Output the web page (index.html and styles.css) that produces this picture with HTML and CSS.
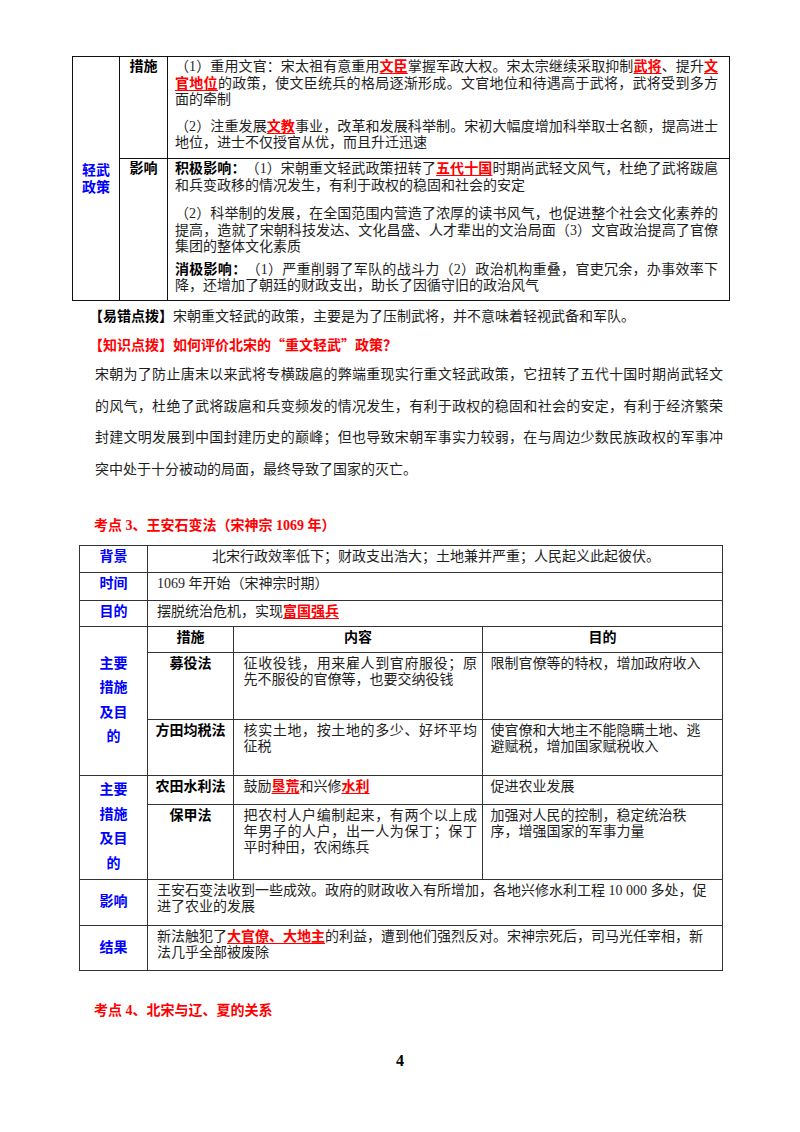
FILE: index.html
```html
<!DOCTYPE html>
<html lang="zh-CN">
<head>
<meta charset="utf-8">
<title>王安石变法</title>
<link rel="stylesheet" href="styles.css">
</head>
<body>
<div class="page">
  <table class="t1">
    <colgroup><col class="t1-c1"><col class="t1-c2"><col class="t1-c3"></colgroup>
    <tr class="t1-r1">
      <td class="t1-side" rowspan="2">轻武<br>政策</td>
      <td class="t1-label">措施</td>
      <td class="t1-body">
        <p>（1）重用文官：宋太祖有意重用<b class="key">文臣</b>掌握军政大权。宋太宗继续采取抑制<b class="key">武将</b>、提升<b class="key">文官地位</b>的政策，使文臣统兵的格局逐渐形成。文官地位和待遇高于武将，武将受到多方面的牵制</p>
        <p class="gap-a">（2）注重发展<b class="key">文教</b>事业，改革和发展科举制。宋初大幅度增加科举取士名额，提高进士地位，进士不仅授官从优，而且升迁迅速</p>
      </td>
    </tr>
    <tr class="t1-r2">
      <td class="t1-label">影响</td>
      <td class="t1-body">
        <p><b>积极影响：</b>（1）宋朝重文轻武政策扭转了<b class="key">五代十国</b>时期尚武轻文风气，杜绝了武将跋扈和兵变政移的情况发生，有利于政权的稳固和社会的安定</p>
        <p class="gap-b">（2）科举制的发展，在全国范围内营造了浓厚的读书风气，也促进整个社会文化素养的提高，造就了宋朝科技发达、文化昌盛、人才辈出的文治局面（3）文官政治提高了官僚集团的整体文化素质</p>
        <p class="gap-c"><b>消极影响：</b>（1）严重削弱了军队的战斗力（2）政治机构重叠，官吏冗余，办事效率下降，还增加了朝廷的财政支出，助长了因循守旧的政治风气</p>
      </td>
    </tr>
  </table>

  <p class="tip tip-first"><b>【易错点拨】</b>宋朝重文轻武的政策，主要是为了压制武将，并不意味着轻视武备和军队。</p>
  <p class="tip tip-red">【知识点拨】如何评价北宋的<span class="cjk">“</span>重文轻武<span class="cjk">”</span>政策？</p>
  <p class="essay">宋朝为了防止唐末以来武将专横跋扈的弊端重现实行重文轻武政策，它扭转了五代十国时期尚武轻文的风气，杜绝了武将跋扈和兵变频发的情况发生，有利于政权的稳固和社会的安定，有利于经济繁荣封建文明发展到中国封建历史的巅峰；但也导致宋朝军事实力较弱，在与周边少数民族政权的军事冲突中处于十分被动的局面，最终导致了国家的灭亡。</p>

  <h2 class="kd">考点 3、王安石变法（宋神宗 1069 年）</h2>

  <table class="t2">
    <colgroup><col class="t2-c1"><col class="t2-c2"><col class="t2-c3"><col class="t2-c4"></colgroup>
    <tr class="r-bg">
      <td class="side">背景</td>
      <td class="wide center" colspan="3">北宋行政效率低下；财政支出浩大；土地兼并严重；人民起义此起彼伏。</td>
    </tr>
    <tr class="r-time">
      <td class="side">时间</td>
      <td class="wide" colspan="3">1069 年开始（宋神宗时期）</td>
    </tr>
    <tr class="r-aim">
      <td class="side">目的</td>
      <td class="wide" colspan="3">摆脱统治危机，实现<b class="key">富国强兵</b></td>
    </tr>
    <tr class="r-head">
      <td class="side side-mid side-tall" rowspan="3">主要<br>措施<br>及目<br>的</td>
      <td class="name">措施</td>
      <td class="head">内容</td>
      <td class="head">目的</td>
    </tr>
    <tr class="r-my">
      <td class="name">募役法</td>
      <td class="cont">征收役钱，用来雇人到官府服役；原先不服役的官僚等，也要交纳役钱</td>
      <td class="goal">限制官僚等的特权，增加政府收入</td>
    </tr>
    <tr class="r-ft">
      <td class="name">方田均税法</td>
      <td class="cont">核实土地，按土地的多少、好坏平均征税</td>
      <td class="goal">使官僚和大地主不能隐瞒土地、逃避赋税，增加国家赋税收入</td>
    </tr>
    <tr class="r-nt">
      <td class="side side-mid side-tall" rowspan="2">主要<br>措施<br>及目<br>的</td>
      <td class="name">农田水利法</td>
      <td class="cont">鼓励<b class="key">垦荒</b>和兴修<b class="key">水利</b></td>
      <td class="goal">促进农业发展</td>
    </tr>
    <tr class="r-bj">
      <td class="name">保甲法</td>
      <td class="cont">把农村人户编制起来，有两个以上成年男子的人户，出一人为保丁；保丁平时种田，农闲练兵</td>
      <td class="goal">加强对人民的控制，稳定统治秩序，增强国家的军事力量</td>
    </tr>
    <tr class="r-yx">
      <td class="side side-mid">影响</td>
      <td class="wide" colspan="3">王安石变法收到一些成效。政府的财政收入有所增加，各地兴修水利工程 10 000 多处，促进了农业的发展</td>
    </tr>
    <tr class="r-jg">
      <td class="side side-mid">结果</td>
      <td class="wide" colspan="3">新法触犯了<b class="key">大官僚、大地主</b>的利益，遭到他们强烈反对。宋神宗死后，司马光任宰相，新法几乎全部被废除</td>
    </tr>
  </table>

  <h2 class="kd kd-4">考点 4、北宋与辽、夏的关系</h2>

  <div class="pnum">4</div>
</div>
</body>
</html>
```

FILE: styles.css
```css
html, body {
  margin: 0;
  padding: 0;
  background: #ffffff;
}

body {
  font-family: "Liberation Serif", "Noto Sans CJK SC", serif;
  font-size: 14px;
  color: #1e1e1e;
  text-spacing-trim: space-all;
}

.page {
  width: 800px;
  padding-top: 56px;
}

p {
  margin: 0;
}

b {
  font-weight: bold;
  color: #000;
}

.cjk {
  font-family: "Noto Sans CJK SC", sans-serif;
}

.key,
b.key {
  color: #ff0000;
  font-weight: bold;
  text-decoration: underline;
  text-decoration-thickness: 1px;
  text-underline-offset: 2px;
}

/* ---------- table 1 ---------- */
.t1 {
  border-collapse: collapse;
  table-layout: fixed;
  width: 657px;
  margin-left: 72px;
}

.t1-c1 { width: 47px; }
.t1-c2 { width: 48px; }
.t1-c3 { width: 562px; }

.t1 td {
  border: 1px solid #111;
  padding: 0;
  vertical-align: top;
}

.t1-r1 { height: 102px; }
.t1-r2 { height: 142px; }

.t1 td.t1-side {
  vertical-align: middle;
  text-align: center;
  color: #0000ff;
  font-weight: bold;
  line-height: 17px;
}

.t1 td.t1-label {
  text-align: center;
  font-weight: bold;
  color: #000;
  line-height: 16.5px;
  padding-top: 2px;
}

.t1 td.t1-body {
  padding: 2px 11px 0 7px;
  line-height: 16.5px;
  text-align: justify;
}

.gap-a { margin-top: 10px; }
.gap-b { margin-top: 12px; }
.gap-c { margin-top: 6px; }

/* ---------- notes ---------- */
.tip {
  margin-left: 89px;
}

.tip-first {
  margin-top: 2px;
  line-height: 28px;
}

.tip-red {
  line-height: 26px;
  color: #ff0000;
  font-weight: bold;
}

.essay {
  margin-left: 95px;
  width: 628px;
  line-height: 31.7px;
  text-align: justify;
}

.kd {
  margin: 30px 0 0 94px;
  font-size: 14px;
  line-height: 20px;
  font-weight: bold;
  color: #ff0000;
}

/* ---------- table 2 ---------- */
.t2 {
  border-collapse: collapse;
  table-layout: fixed;
  width: 643px;
  margin: 9px 0 0 79px;
}

.t2-c1 { width: 68px; }
.t2-c2 { width: 86px; }
.t2-c3 { width: 249px; }
.t2-c4 { width: 240px; }

.t2 td {
  border: 1px solid #333;
  padding: 3.5px 7px 0 9px;
  line-height: 16px;
  vertical-align: top;
}

.r-bg { height: 27px; }
.r-time { height: 28px; }
.r-aim { height: 26px; }
.r-head { height: 26px; }
.r-my { height: 67px; }
.r-ft { height: 56px; }
.r-nt { height: 29px; }
.r-bj { height: 75px; }
.r-yx { height: 46px; }
.r-jg { height: 45px; }

.t2 td.side {
  padding: 3.5px 0 0 0;
  text-align: center;
  color: #0000ff;
  font-weight: bold;
}

.t2 td.side-mid {
  vertical-align: middle;
  padding: 0;
}

.t2 td.side-tall {
  line-height: 24.5px;
}

.t2 td.center {
  text-align: center;
}

.t2 td.name,
.t2 td.head {
  padding: 3.5px 0 0 0;
  text-align: center;
  font-weight: bold;
  color: #000;
}

.t2 td.cont {
  padding: 3.5px 5px 0 9.5px;
  text-align: justify;
}

.t2 td.goal {
  padding: 3.5px 15px 0 7.5px;
}

.kd-4 {
  margin-top: 30px;
}

.pnum {
  margin-top: 30px;
  text-align: center;
  font-size: 16px;
  line-height: 20px;
  font-weight: bold;
  color: #000;
}
```
